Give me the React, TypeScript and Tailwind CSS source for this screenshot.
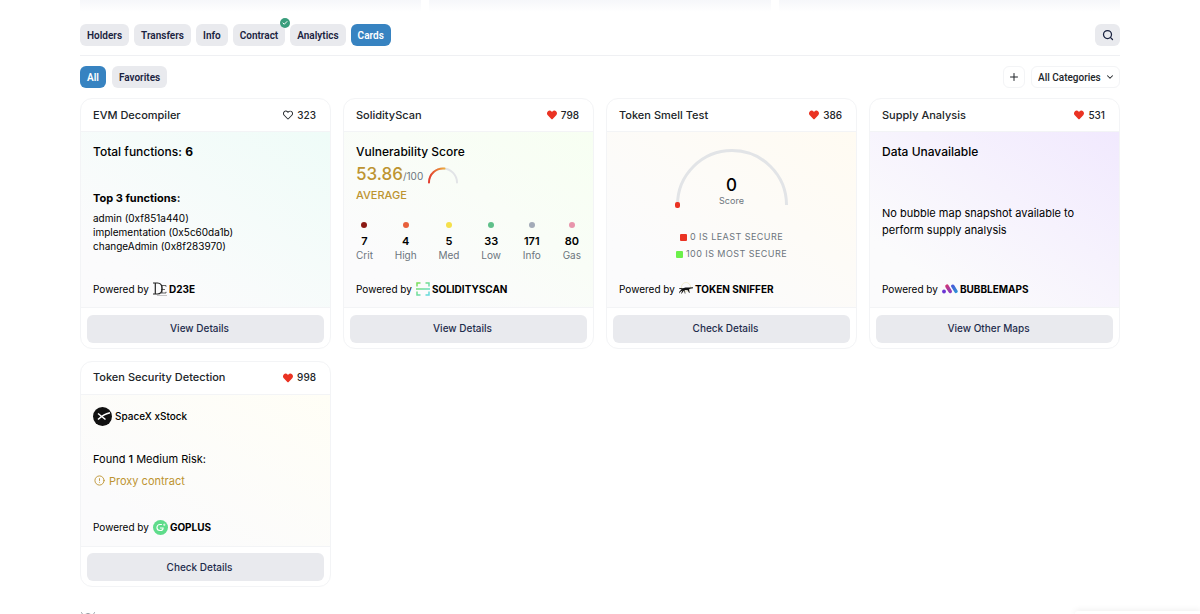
import { useState } from "react";
import type { ReactNode } from "react";
import { Check, ChevronDown, CircleAlert, Plus, Search } from "lucide-react";
import { FaHeart, FaRegHeart } from "react-icons/fa";
import clsx from "clsx";

const TABS = ["Holders", "Transfers", "Info", "Contract", "Analytics", "Cards"];
const FILTERS = ["All", "Favorites"];

const SEVERITIES = [
    { label: "Crit", count: 7, dot: "bg-[#8b1a14]" },
    { label: "High", count: 4, dot: "bg-[#e8603c]" },
    { label: "Med", count: 5, dot: "bg-[#f5e04b]" },
    { label: "Low", count: 33, dot: "bg-[#5fc08a]" },
    { label: "Info", count: 171, dot: "bg-[#a3abb8]" },
    { label: "Gas", count: 80, dot: "bg-[#e895ac]" },
];

function Pill({ label, active, verified, onClick }: { label: string; active: boolean; verified?: boolean; onClick: () => void }) {
    return (
        <button
            type="button"
            onClick={onClick}
            aria-pressed={active}
            className={clsx(
                "relative h-[22px] px-[7px] rounded-md font-['Roboto',sans-serif] text-[10px] font-semibold cursor-pointer",
                active ? "bg-[#3783c1] text-white" : "bg-[#e9eaee] text-[#1a2340]"
            )}
        >
            {label}
            {verified && (
                <span className="absolute -top-[6px] -right-[5px] size-[10px] rounded-full bg-[#3a9d7c] text-white flex items-center justify-center">
                    <Check className="size-[6px]" strokeWidth={4} />
                </span>
            )}
        </button>
    );
}

type CardProps = {
    title: string;
    likes: number;
    liked?: boolean;
    tint: string;
    action: string;
    provider: string;
    logo: ReactNode;
    children: ReactNode;
    short?: boolean;
};

function Card({ title, likes, liked = true, tint, action, provider, logo, children, short }: CardProps) {
    return (
        <article className="self-start rounded-xl border border-[#f3f4f6] bg-white overflow-hidden">
            <header className="h-8 px-3 flex items-center justify-between">
                <h2 className="text-[11px] font-medium text-[#212529]">{title}</h2>
                <button type="button" aria-label={`Like ${title}`} className="mr-[2px] flex items-center gap-1 text-[10px] font-medium text-[#212529] cursor-pointer">
                    {liked ? <FaHeart className="size-[10px] text-[#ea3323]" /> : <FaRegHeart className="size-[10px]" />}
                    {likes}
                </button>
            </header>
            <div className={clsx("px-3 border-y border-[#f3f4f6] flex flex-col bg-linear-to-tr from-[#fbfbfc] from-20%", short ? "h-[153px]" : "h-[177px]", tint)}>
                <div className="flex-1">{children}</div>
                <p className="h-[27px] flex items-start text-[10px]">
                    <span className="h-[18px] flex items-center">
                        Powered by
                        <span className="ml-1 mr-[2px]">{logo}</span>
                        <b>{provider}</b>
                    </span>
                </p>
            </div>
            <footer className="px-[6px] pt-[6px] pb-[5px]">
                <button type="button" className="w-full h-7 pr-3 rounded-md bg-[#e9eaee] text-[10px] font-medium text-[#1f2d4d] cursor-pointer">
                    {action}
                </button>
            </footer>
        </article>
    );
}

function D23eLogo() {
    return (
        <svg className="size-[14px]" viewBox="0 0 14 14" fill="none" stroke="#222">
            <path d="M0 1h4.500C8.400 1 9 4 9 6.500S8 12 4.500 12H0M2.300 1v11" strokeWidth="1.200" />
            <path d="M8 3.500h5v1.300M8 7.500h4M8 11h5V9.800M9 3.500V11" strokeWidth=".7" />
            <path d="M4 13.500h10" strokeWidth=".5" opacity=".5" />
        </svg>
    );
}

function ScanLogo() {
    return (
        <svg className="size-[14px]" viewBox="0 0 14 14" fill="none" strokeWidth="1.500">
            <defs>
                <linearGradient id="scan" x1="0" y1="0" x2="14" y2="14" gradientUnits="userSpaceOnUse">
                    <stop stopColor="#7be04a" />
                    <stop offset="1" stopColor="#62d9ee" />
                </linearGradient>
            </defs>
            <path stroke="url(#scan)" d="M1 4.500V1h3.500M9.500 1H13v3.500M13 9.500V13H9.500M4.500 13H1V9.500M0 6.900L14 7.100" />
        </svg>
    );
}

function SnifferLogo() {
    return (
        <svg className="size-[14px]" viewBox="0 0 14 14">
            <circle cx="7" cy="5" r="4.500" fill="none" stroke="#eee9c4" strokeWidth=".8" />
            <path d="M0 5.900l4 .3L6.500 5.400l3.500.1 4-.3v1l-3 .6-1 .7.800 3.300h-.8L8.700 8.300 6.500 8l-1.800.7L2.800 11.500H2l1.500-3L1.500 9.700.4 11.300H0l.7-2.200 2-1.700L0 6.600z" fill="#111" />
            <path d="M5.300 8.200l.8 3.300" stroke="#111" strokeWidth=".7" />
        </svg>
    );
}

function BubbleLogo() {
    return (
        <svg className="w-[16px] h-[14px]" viewBox="0 0 16 14" fill="none" strokeLinecap="round">
            <defs>
                <linearGradient id="bub-a" x1="3" y1="3" x2="8" y2="11" gradientUnits="userSpaceOnUse">
                    <stop stopColor="#d6336c" />
                    <stop offset="1" stopColor="#8a3fc4" />
                </linearGradient>
                <linearGradient id="bub-b" x1="9" y1="3" x2="14" y2="11" gradientUnits="userSpaceOnUse">
                    <stop stopColor="#4a52d8" />
                    <stop offset="1" stopColor="#2f93d6" />
                </linearGradient>
            </defs>
            <circle cx="2" cy="9.500" r="1.900" fill="#6a35d4" />
            <path d="M5 4.200l3.200 5.200" stroke="url(#bub-a)" strokeWidth="3.600" />
            <path d="M10.800 4.200l3.200 5.200" stroke="url(#bub-b)" strokeWidth="3.400" />
        </svg>
    );
}

function GoPlusLogo() {
    return (
        <svg className="size-[15px]" viewBox="0 0 16 16" fill="none">
            <circle cx="8" cy="8" r="8" fill="#5fdc8b" />
            <path d="M9.500 4.800H7.400a3.200 3.200 0 000 6.400h.8a2.600 2.600 0 002.600-2.700H7.400" stroke="#fff" strokeWidth="1.200" />
            <path d="M12 3.800v2.600M10.700 5.100h2.600" stroke="#fff" strokeWidth=".7" />
        </svg>
    );
}

function StockLogo() {
    return (
        <svg className="size-[19px]" viewBox="0 0 19 19" fill="none">
            <circle cx="9.500" cy="9.500" r="9.500" fill="#111" />
            <path d="M5 6.500l7.500 6M5 12.500c3-3 6-5.500 12-6.800" stroke="#fff" strokeWidth="1.500" />
        </svg>
    );
}

export default function App() {
    const [tab, setTab] = useState("Cards");
    const [filter, setFilter] = useState("All");

    return (
        <div className="h-screen overflow-hidden bg-white px-20 font-['Inter',sans-serif] text-black">
            {/* Lower edge of the overview panels */}
            <div className="h-6 grid grid-cols-3 gap-2">
                <div className="h-3 bg-linear-to-b from-[#f6f7fa] to-white" />
                <div className="h-3 bg-linear-to-b from-[#f6f7fa] to-white" />
                <div className="h-3 bg-linear-to-b from-[#f6f7fa] to-white" />
            </div>

            <nav className="flex items-center justify-between pb-[9px] border-b border-[#eff0f3]">
                <div className="flex gap-[5px]">
                    {TABS.map((t) => (
                        <Pill key={t} label={t} active={tab === t} verified={t === "Contract"} onClick={() => setTab(t)} />
                    ))}
                </div>
                <button type="button" aria-label="Search" className="w-[25px] h-[22px] rounded-md bg-[#e9eaee] text-[#1a2340] flex items-center justify-center cursor-pointer">
                    <Search className="size-3" strokeWidth={2.5} />
                </button>
            </nav>

            <div className="flex items-center justify-between py-[10px]">
                <div className="flex gap-[6px]">
                    {FILTERS.map((f) => (
                        <Pill key={f} label={f} active={filter === f} onClick={() => setFilter(f)} />
                    ))}
                </div>
                <div className="flex gap-[6px] text-[#212529]">
                    <button type="button" aria-label="Add card" className="size-[22px] rounded-md border border-[#f3f4f6] flex items-center justify-center cursor-pointer">
                        <Plus className="size-3" />
                    </button>
                    <div className="relative">
                        <select aria-label="Category" className="block appearance-none h-[22px] w-[89px] pl-[6px] rounded-md border border-[#f3f4f6] bg-white font-['Roboto',sans-serif] text-[10px] font-medium">
                            <option>All Categories</option>
                        </select>
                        <ChevronDown className="absolute right-[5px] top-[6px] size-[10px] pointer-events-none" strokeWidth={2.5} />
                    </div>
                </div>
            </div>

            <main className="grid grid-cols-4 gap-3">
                <Card title="EVM Decompiler" likes={323} liked={false} tint="to-[#effcf8]" action="View Details" provider="D23E" logo={<D23eLogo />}>
                    <p className="pt-3 text-xs leading-4 font-medium">
                        Total functions: <b>6</b>
                    </p>
                    <h3 className="mt-[30px] text-[11px] leading-4 font-bold">Top 3 functions:</h3>
                    <ul className="mt-[5px] text-[10px] leading-[14px]">
                        <li>admin (0xf851a440)</li>
                        <li>implementation (0x5c60da1b)</li>
                        <li>changeAdmin (0x8f283970)</li>
                    </ul>
                </Card>

                <Card title="SolidityScan" likes={798} tint="to-[#f7fff2]" action="View Details" provider="SOLIDITYSCAN" logo={<ScanLogo />}>
                    <p className="pt-3 text-xs leading-4 font-medium">Vulnerability Score</p>
                    <div className="mt-1 flex items-center">
                        <p className="flex items-baseline text-[17px] leading-[21px] font-medium text-[#bd9431]">
                            53.86<span className="text-[10px] font-normal text-[#6c757d]">/100</span>
                        </p>
                        <svg className="ml-[5px] w-[30px] h-[17px]" viewBox="0 0 30 17" fill="none" strokeWidth="2" strokeLinecap="round">
                            <defs>
                                <linearGradient id="vuln" x1="0" x2="17" y1="0" y2="0" gradientUnits="userSpaceOnUse">
                                    <stop stopColor="#e3342a" />
                                    <stop offset="1" stopColor="#eeb040" />
                                </linearGradient>
                            </defs>
                            <path d="M1 15.500A14 14 0 0129 15.500" stroke="#e2e4e7" />
                            <path d="M1 15.500A14 14 0 0116.500 1.600" stroke="url(#vuln)" />
                        </svg>
                    </div>
                    <p className="text-[11px] leading-4 font-medium text-[#bd9431]">AVERAGE</p>
                    <ul className="mt-[19px] flex justify-between">
                        {SEVERITIES.map((s) => (
                            <li key={s.label} className="flex flex-col items-center text-[10px] leading-[14px] text-[#6c757d]">
                                <span className={clsx("size-[6px] rounded-full mb-[6px]", s.dot)} />
                                <b className="text-[11px] font-semibold text-black">{s.count}</b>
                                {s.label}
                            </li>
                        ))}
                    </ul>
                </Card>

                <Card title="Token Smell Test" likes={386} tint="to-[#fffbf2]" action="Check Details" provider="TOKEN SNIFFER" logo={<SnifferLogo />}>
                    <div className="pt-[15px] flex flex-col items-center">
                        <div className="grid justify-items-center">
                            <svg className="col-start-1 row-start-1 w-[116px] h-[62px]" viewBox="0 0 116 62" fill="none" strokeWidth="3">
                                <path d="M3.500 58A54.500 54.500 0 01112.500 58" stroke="#e2e4e7" />
                                <rect x="1" y="55" width="5" height="6" rx="2" fill="#ea3323" />
                            </svg>
                            <div className="col-start-1 row-start-1 pt-7 text-center">
                                <p className="text-[17px] leading-5 font-medium">0</p>
                                <p className="text-[9px] leading-3 text-[#6c757d]">Score</p>
                            </div>
                        </div>
                        <ul className="mt-5 flex flex-col items-center gap-px text-[9px] leading-4 tracking-wider text-[#6c757d]">
                            <li className="flex items-center gap-[3px]">
                                <span className="size-[7px] rounded-[1px] bg-[#ea3323]" />0 IS LEAST SECURE
                            </li>
                            <li className="flex items-center gap-[3px]">
                                <span className="size-[7px] rounded-[1px] bg-[#6cf04a]" />100 IS MOST SECURE
                            </li>
                        </ul>
                    </div>
                </Card>

                <Card title="Supply Analysis" likes={531} tint="to-[#f1e9fe]" action="View Other Maps" provider="BUBBLEMAPS" logo={<BubbleLogo />}>
                    <p className="pt-3 text-xs leading-4 font-medium">Data Unavailable</p>
                    <p className="mt-[45px] text-[11px] leading-[17px]">
                        No bubble map snapshot available to perform supply analysis
                    </p>
                </Card>

                <Card short title="Token Security Detection" likes={998} tint="to-[#fffef6]" action="Check Details" provider="GOPLUS" logo={<GoPlusLogo />}>
                    <p className="pt-3 flex items-center gap-[3px] text-[10px] font-medium">
                        <StockLogo />
                        SpaceX xStock
                    </p>
                    <p className="mt-[25px] text-[11px] leading-4">
                        Found <b className="font-medium">1</b> Medium Risk:
                    </p>
                    <p className="mt-[6px] flex items-center gap-1 text-[11px] leading-4 text-[#bd9431]">
                        <CircleAlert className="ml-px size-[11px]" />
                        Proxy contract
                    </p>
                </Card>
            </main>

            {/* Hint icon that starts the note under the cards */}
            <svg className="mt-6 w-4 h-3" viewBox="0 0 16 12" fill="none" stroke="#8b929a">
                <path d="M1 1.500l1.500 1M15 1.500l-1.500 1M4.500 6a3.500 3.500 0 017 0c0 2-1.500 2.500-1.500 5H6c0-2.500-1.500-3-1.500-5z" />
            </svg>

            {/* Top edge of the docked panel */}
            <aside className="fixed bottom-0 right-0 h-[3px] w-[125px] rounded-tl-lg bg-white shadow-[0_0_6px_rgba(0,0,0,0.12)]" />
        </div>
    );
}
